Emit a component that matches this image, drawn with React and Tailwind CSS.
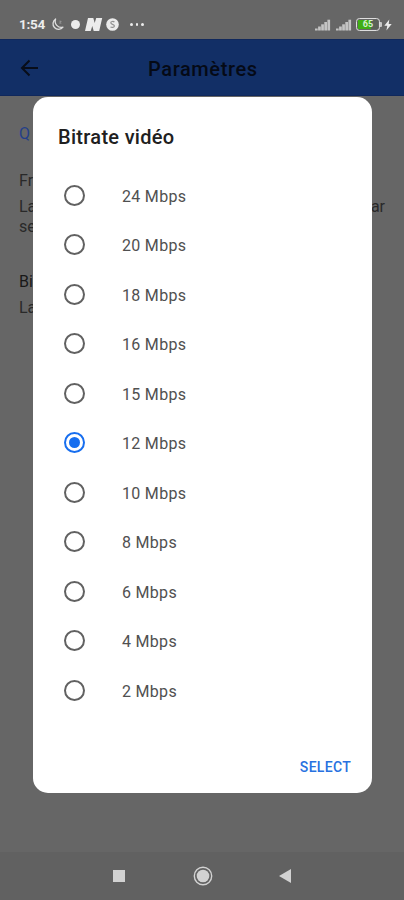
import React from 'react';

const bitrates = [24, 20, 18, 16, 15, 12, 10, 8, 6, 4, 2];
const selected = 12;

const Signal = () => (
    <svg width="16" height="12" viewBox="0 0 16 12" fill="#c4c4c4">
        <rect x="0" y="9.5" width="2.7" height="2" />
        <rect x="3.1" y="7.5" width="2.7" height="4" />
        <rect x="6.2" y="5.3" width="2.7" height="6.2" />
        <rect x="9.3" y="3" width="2.7" height="8.5" />
        <rect x="12.4" y="0.7" width="2.7" height="10.8" />
    </svg>
);

const StatusBar = () => (
    <div className="h-[39px] flex items-center pl-[19px] pr-[12px] pt-[10px] text-[#ececec]">
        <span className="w-[26px] text-[13.5px] leading-none font-bold tracking-[-0.3px] whitespace-nowrap">1:54</span>
        <svg className="ml-[6px]" width="13" height="13" viewBox="0 0 13 13" fill="none" stroke="#dedede" strokeWidth="1.3" strokeLinejoin="round">
            <path d="M4.6 1A5.6 5.6 0 1 0 12 9.2A6.2 6.2 0 0 1 4.6 1Z" />
            <path d="M8.4 3.2H10.2L8.6 5.2H10.4" strokeWidth="0.6" strokeOpacity="0.6" />
        </svg>
        <span className="ml-[6.5px] size-[9px] rounded-full bg-[#ececec]" />
        <svg className="ml-[5.5px]" width="18" height="13" viewBox="0 0 18 13" fill="#ececec">
            <path d="M3 0H8.3L9.7 5L11.2 0H17.2L14.2 13H8.7L7.3 8L5.7 13H0Z" />
        </svg>
        <svg className="ml-[3px]" width="13" height="13" viewBox="0 0 13 13">
            <circle cx="6.5" cy="6.5" r="6.3" fill="#ececec" />
            <path d="M8.4 4.2C7.6 3.1 4.8 3.2 4.8 4.8C4.8 6.7 8.4 6 8.4 8C8.4 9.7 5.5 9.8 4.5 8.8" fill="none" stroke="#929292" strokeWidth="1.2" />
        </svg>
        <div className="ml-[11px] flex gap-[3px]">
            <span className="size-[2.5px] rounded-full bg-[#ececec]" />
            <span className="size-[2.5px] rounded-full bg-[#ececec]" />
            <span className="size-[2.5px] rounded-full bg-[#ececec]" />
        </div>
        <div className="ml-auto flex items-center">
            <Signal />
            <span className="w-[5px]" />
            <Signal />
            <div className="ml-[4px] w-[24px] h-[13px] rounded-[3.5px] border-[1.5px] border-[#dedede] p-[1px]">
                <div className="h-full bg-[linear-gradient(90deg,#3fae14_65%,#5b6158_65%)] flex items-center justify-center text-[9px] leading-none font-bold text-[#d5f0cb]">
                    65
                </div>
            </div>
            <span className="w-[2px] h-[5px] bg-[#c9c9c9] rounded-r-[1px]" />
            <svg className="ml-[2px]" width="8" height="12" viewBox="0 0 8 12" fill="#ececec">
                <path d="M5.3 0.5L0.3 6.8H3.3L2.4 11.5L7.7 5.1H4.7Z" />
            </svg>
        </div>
    </div>
);

const Radio = ({ checked }) => (
    <span className={`size-[21px] shrink-0 rounded-full border-2 flex items-center justify-center ${checked ? 'border-[#176eef]' : 'border-[#616161]'}`}>
        {checked && <span className="size-[11px] rounded-full bg-[#176eef]" />}
    </span>
);

const App = () => (
    <div className="relative w-[404px] h-[900px] overflow-hidden bg-[#666666] flex flex-col font-['Roboto',sans-serif]">
        <StatusBar />

        {/* App bar */}
        <div className="h-[57px] bg-[#122f66] flex items-center pl-[20px] border-y border-[#10285c]">
            <svg width="20" height="18" viewBox="0 0 20 18" fill="none" stroke="#080d19" strokeWidth="2">
                <path d="M18 9H2.5M9.5 1.5L2 9L9.5 16.5" />
            </svg>
            <h1 className="ml-[108px] pt-[2px] text-[20px] leading-none font-medium tracking-[0.6px] text-[#050a16]">Paramètres</h1>
        </div>

        {/* Settings list, dimmed behind the dialog */}
        <div className="grow px-[19px] pt-[28px] text-[16px] leading-[20px] text-[#292929]">
            <p className="text-[16px] text-[#243f8a]">Q</p>
            <p className="mt-[27px]">Fr</p>
            <div className="mt-[6px] flex justify-between">
                <span>La</span>
                <span>ar</span>
            </div>
            <p>se</p>
            <p className="mt-[35px] text-[#181818]">Bi</p>
            <p className="mt-[6px]">La</p>
        </div>

        {/* Navigation bar */}
        <div className="h-[48px] bg-[#616161] flex items-center">
            <span className="ml-[113px] size-[12px] bg-[#d2d2d2]" />
            <svg className="ml-[68px]" width="20" height="20" viewBox="0 0 20 20">
                <circle cx="10" cy="10" r="8.7" fill="none" stroke="#d2d2d2" strokeWidth="1.4" />
                <circle cx="10" cy="10" r="6.3" fill="#d2d2d2" />
            </svg>
            <svg className="ml-[66px]" width="13" height="14" viewBox="0 0 13 14" fill="#d2d2d2">
                <path d="M12 0V14L0 7Z" />
            </svg>
        </div>

        {/* Bitrate dialog */}
        <div className="absolute left-[33px] top-[97px] w-[339px] h-[696px] rounded-[15px] bg-white flex flex-col">
            <h2 className="pl-[25px] pt-[28px] text-[20px] leading-[24px] tracking-[0.3px] font-medium text-[#202020]">Bitrate vidéo</h2>
            <div className="mt-[21.5px]">
                {bitrates.map((rate) => (
                    <div key={rate} className="h-[49.5px] pl-[31px] flex items-center">
                        <Radio checked={rate === selected} />
                        <span className="ml-[37px] pt-[3px] text-[16px] leading-none tracking-[0.3px] text-[#505050]">{rate} Mbps</span>
                    </div>
                ))}
            </div>
            <button className="mt-auto mb-[18px] mr-[21px] self-end text-[14px] leading-[16px] font-medium tracking-[0.3px] text-[#2871e0]">SELECT</button>
        </div>
    </div>
);

export default App;
